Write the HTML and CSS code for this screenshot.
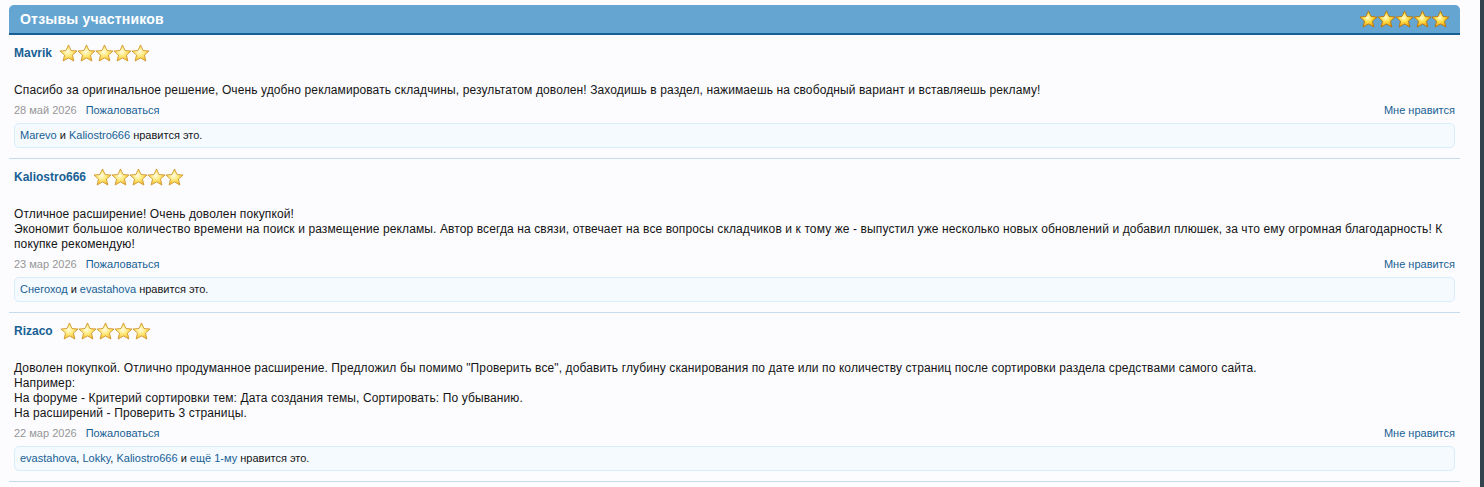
FILE: index.html
```html
<!DOCTYPE html>
<html lang="ru">
<head>
<meta charset="utf-8">
<title>Отзывы участников</title>
<link rel="stylesheet" href="styles.css">
</head>
<body>
<svg class="defs" width="0" height="0" aria-hidden="true">
  <defs>
    <radialGradient id="gBig" cx="45%" cy="42%" r="62%">
      <stop offset="0" stop-color="#fffbd2"/>
      <stop offset="0.4" stop-color="#ffe04a"/>
      <stop offset="0.8" stop-color="#f2b21e"/>
      <stop offset="1" stop-color="#cf8a10"/>
    </radialGradient>
    <radialGradient id="gSmall" cx="45%" cy="42%" r="62%">
      <stop offset="0" stop-color="#fffce6"/>
      <stop offset="0.45" stop-color="#ffe978"/>
      <stop offset="0.85" stop-color="#f5c543"/>
      <stop offset="1" stop-color="#e0a42a"/>
    </radialGradient>
    <symbol id="starBig" viewBox="0 0 24 24">
      <path d="M12 1.2l3.2 7 7.6.7-5.8 5.1 1.8 7.5L12 17.6l-6.8 3.9 1.8-7.5-5.8-5.1 7.6-.7z" fill="url(#gBig)" stroke="#b7730c" stroke-width="1.1" stroke-linejoin="round"/>
    </symbol>
    <symbol id="starSmall" viewBox="0 0 24 24">
      <path d="M12 1.2l3.2 7 7.6.7-5.8 5.1 1.8 7.5L12 17.6l-6.8 3.9 1.8-7.5-5.8-5.1 7.6-.7z" fill="url(#gSmall)" stroke="#cf952c" stroke-width="1.1" stroke-linejoin="round"/>
    </symbol>
  </defs>
</svg>
<div class="page">
  <div class="main">
    <div class="block">
      <div class="block-head">
        <h3 class="block-title">Отзывы участников</h3>
        <div class="stars stars-big">
          <svg class="star-big"><use href="#starBig"/></svg>
          <svg class="star-big"><use href="#starBig"/></svg>
          <svg class="star-big"><use href="#starBig"/></svg>
          <svg class="star-big"><use href="#starBig"/></svg>
          <svg class="star-big"><use href="#starBig"/></svg>
        </div>
      </div>

      <div class="review">
        <div class="review-head">
          <a class="user" href="#">Mavrik</a>
          <div class="stars">
            <svg class="star"><use href="#starSmall"/></svg>
            <svg class="star"><use href="#starSmall"/></svg>
            <svg class="star"><use href="#starSmall"/></svg>
            <svg class="star"><use href="#starSmall"/></svg>
            <svg class="star"><use href="#starSmall"/></svg>
          </div>
        </div>
        <div class="message">Спасибо за оригинальное решение, Очень удобно рекламировать складчины, результатом доволен! Заходишь в раздел, нажимаешь на свободный вариант и вставляешь рекламу!</div>
        <div class="meta">
          <div class="meta-left"><span class="date">28 май 2026</span><a class="link" href="#">Пожаловаться</a></div>
          <a class="link" href="#">Мне нравится</a>
        </div>
        <div class="likes"><a class="link" href="#">Marevo</a> и <a class="link" href="#">Kaliostro666</a> нравится это.</div>
      </div>

      <div class="review">
        <div class="review-head">
          <a class="user" href="#">Kaliostro666</a>
          <div class="stars">
            <svg class="star"><use href="#starSmall"/></svg>
            <svg class="star"><use href="#starSmall"/></svg>
            <svg class="star"><use href="#starSmall"/></svg>
            <svg class="star"><use href="#starSmall"/></svg>
            <svg class="star"><use href="#starSmall"/></svg>
          </div>
        </div>
        <div class="message">Отличное расширение! Очень доволен покупкой!<br>Экономит большое количество времени на поиск и размещение рекламы. Автор всегда на связи, отвечает на все вопросы складчиков и к тому же - выпустил уже несколько новых обновлений и добавил плюшек, за что ему огромная благодарность! К покупке рекомендую!</div>
        <div class="meta">
          <div class="meta-left"><span class="date">23 мар 2026</span><a class="link" href="#">Пожаловаться</a></div>
          <a class="link" href="#">Мне нравится</a>
        </div>
        <div class="likes"><a class="link" href="#">Снегоход</a> и <a class="link" href="#">evastahova</a> нравится это.</div>
      </div>

      <div class="review">
        <div class="review-head">
          <a class="user" href="#">Rizaco</a>
          <div class="stars">
            <svg class="star"><use href="#starSmall"/></svg>
            <svg class="star"><use href="#starSmall"/></svg>
            <svg class="star"><use href="#starSmall"/></svg>
            <svg class="star"><use href="#starSmall"/></svg>
            <svg class="star"><use href="#starSmall"/></svg>
          </div>
        </div>
        <div class="message">Доволен покупкой. Отлично продуманное расширение. Предложил бы помимо "Проверить все", добавить глубину сканирования по дате или по количеству страниц после сортировки раздела средствами самого сайта.<br>Например:<br>На форуме - Критерий сортировки тем: Дата создания темы, Сортировать: По убыванию.<br>На расширений - Проверить 3 страницы.</div>
        <div class="meta">
          <div class="meta-left"><span class="date">22 мар 2026</span><a class="link" href="#">Пожаловаться</a></div>
          <a class="link" href="#">Мне нравится</a>
        </div>
        <div class="likes"><a class="link" href="#">evastahova</a>, <a class="link" href="#">Lokky</a>, <a class="link" href="#">Kaliostro666</a> и <a class="link" href="#">ещё 1-му</a> нравится это.</div>
      </div>
    </div>
  </div>
  <div class="strip"></div>
</div>
</body>
</html>
```

FILE: styles.css
```css
html, body {
  margin: 0;
  padding: 0;
  height: 100%;
}
body {
  background: #fcfcff;
  font-family: "Liberation Sans", Arial, sans-serif;
  color: #141414;
  overflow: hidden;
}
.defs {
  position: absolute;
  width: 0;
  height: 0;
}
.page {
  display: flex;
  min-height: 100vh;
}
.main {
  flex: 1;
  padding: 5px 20px 0 9px;
}
.strip {
  width: 4px;
  background: #33434d;
}
.block-head {
  display: flex;
  align-items: center;
  justify-content: space-between;
  height: 28px;
  padding: 0 10px 0 11px;
  background: #65a5d1;
  border-bottom: 2px solid #176093;
  border-radius: 5px 5px 0 0;
}
.block-title {
  margin: 0;
  font-size: 14px;
  font-weight: bold;
  color: #ffffff;
  line-height: 28px;
  letter-spacing: 0.2px;
}
.stars {
  display: flex;
  gap: 0;
}
.star-big {
  width: 19px;
  height: 19px;
  margin-right: -1px;
}
.star-big:last-child {
  margin-right: 0;
}
.star {
  width: 19px;
  height: 19px;
  margin-right: -1px;
}
.review {
  padding: 9px 5px 10px 5px;
  border-bottom: 1px solid #c6dbed;
}
.review-head {
  display: flex;
  align-items: center;
  gap: 7px;
  height: 18px;
}
.user {
  font-size: 12px;
  font-weight: bold;
  color: #176093;
  text-decoration: none;
  line-height: 18px;
}
.message {
  margin-top: 21px;
  font-size: 12px;
  line-height: 15px;
  letter-spacing: 0.11px;
}
.meta {
  display: flex;
  justify-content: space-between;
  margin-top: 5px;
  font-size: 11px;
  line-height: 14px;
}
.meta-left {
  display: flex;
  gap: 9px;
}
.date {
  color: #969696;
}
.link {
  color: #176093;
  text-decoration: none;
}
.likes {
  margin-top: 6px;
  padding: 5px 5px;
  border: 1px solid #d7edfc;
  border-radius: 5px;
  background: #f5faff;
  font-size: 11px;
  line-height: 13px;
}
```
